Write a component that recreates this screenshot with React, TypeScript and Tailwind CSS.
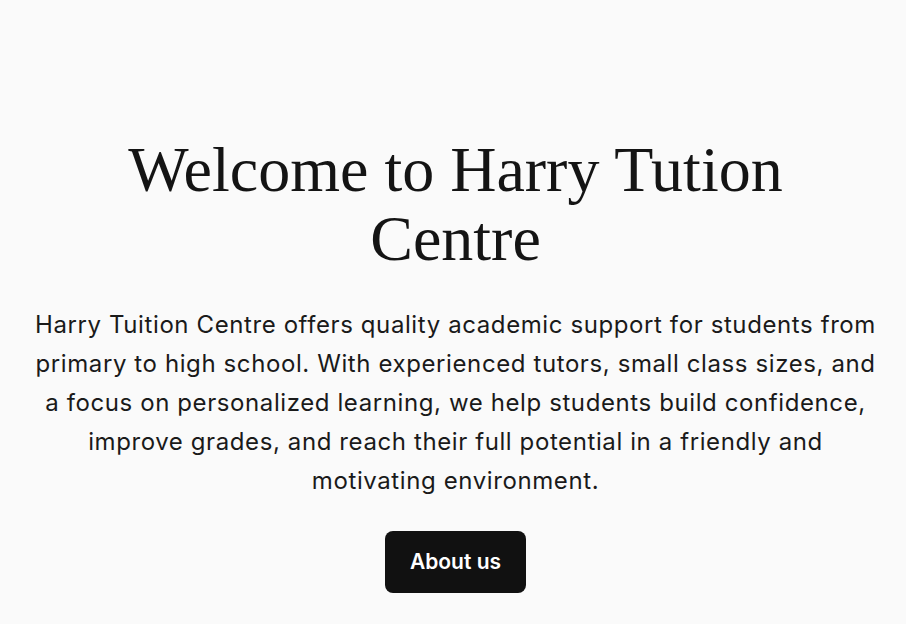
import React from "react";

function App() {
  return (
    <div className="min-h-screen w-full bg-[#fafafa] flex flex-col items-center pl-[29px] pr-6 pt-[135px] pb-10 font-['Inter',sans-serif]">
      <h1 className="text-center text-[64px] leading-[69px] text-[#141414] max-w-[700px] font-['Liberation_Serif',serif]">
        Welcome to Harry Tution Centre
      </h1>

      <p className="mt-[32px] text-center text-[24px] leading-[39px] tracking-[0.025em] text-[#1a1a1a] max-w-[846px]">
        Harry Tuition Centre offers quality academic support for students from
        primary to high school. With experienced tutors, small class sizes, and
        a focus on personalized learning, we help students build confidence,
        improve grades, and reach their full potential in a friendly and
        motivating environment.
      </p>

      <button className="mt-[31px] h-[62px] w-[141px] rounded-lg bg-[#111111] text-white text-[21px] font-semibold">
        About us
      </button>
    </div>
  );
}

export default App;
